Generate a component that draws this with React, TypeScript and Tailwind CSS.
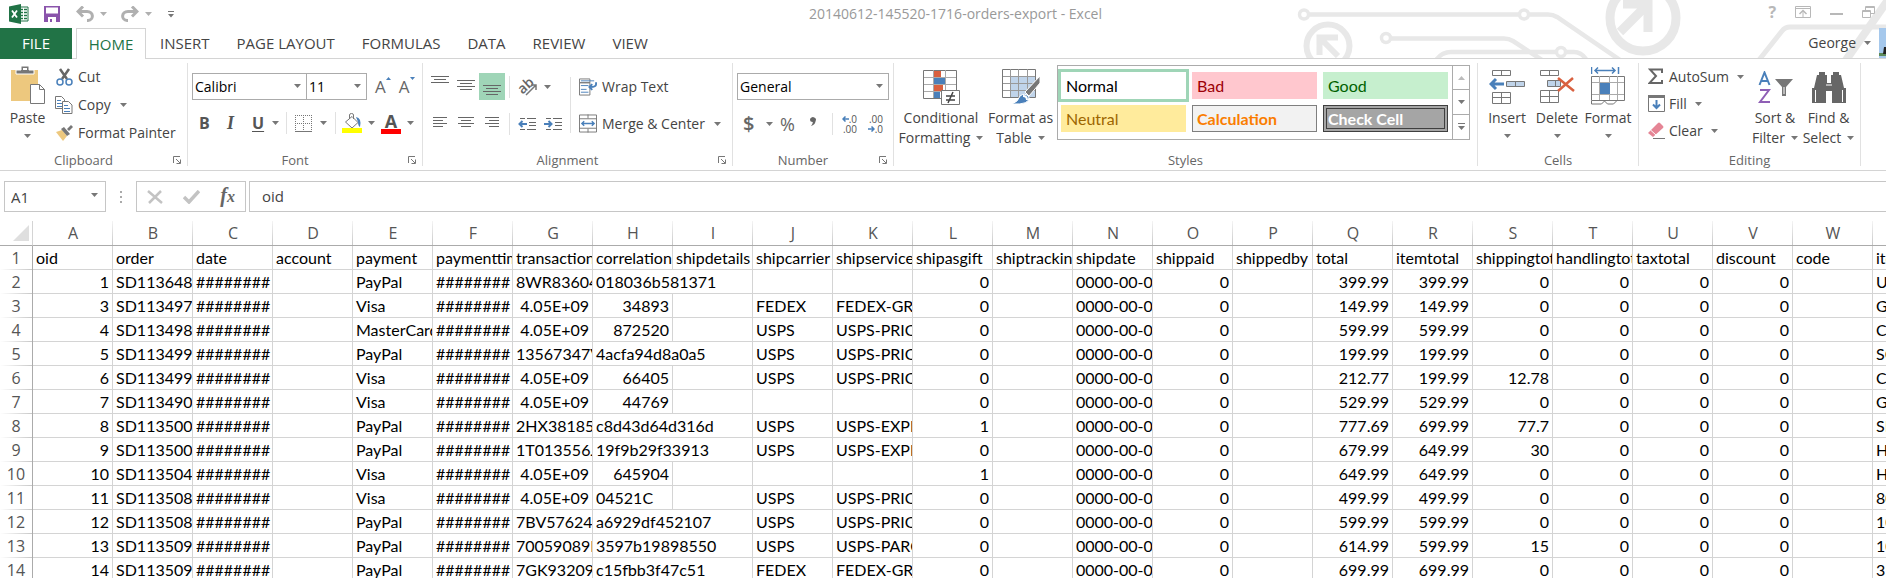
import type { ReactNode } from 'react'

const TABS = ['INSERT', 'PAGE LAYOUT', 'FORMULAS', 'DATA', 'REVIEW', 'VIEW']

const COLUMNS = 'ABCDEFGHIJKLMNOPQRSTUVWX'.split('')

const FIELDS = [
  'oid', 'order', 'date', 'account', 'payment', 'paymenttime', 'transactionid', 'correlationid',
  'shipdetails', 'shipcarrier', 'shipservice', 'shipasgift', 'shiptracking', 'shipdate', 'shippaid',
  'shippedby', 'total', 'itemtotal', 'shippingtotal', 'handlingtotal', 'taxtotal', 'discount', 'code', 'items',
]

interface Order {
  oid: number
  order: string
  payment: string
  transaction: string | null
  correlation: string | number
  carrier: string
  service: string
  gift: number
  total: number
  itemTotal: number
  shipping: number
  item: string
}

// transaction is null where the card number shows in scientific notation
const ORDERS: Order[] = [
  { oid: 1, order: 'SD1136485', payment: 'PayPal', transaction: '8WR836044', correlation: '018036b581371', carrier: '', service: '', gift: 0, total: 399.99, itemTotal: 399.99, shipping: 0, item: 'U' },
  { oid: 3, order: 'SD1134979', payment: 'Visa', transaction: null, correlation: 34893, carrier: 'FEDEX', service: 'FEDEX-GROUND', gift: 0, total: 149.99, itemTotal: 149.99, shipping: 0, item: 'G' },
  { oid: 4, order: 'SD1134983', payment: 'MasterCard', transaction: null, correlation: 872520, carrier: 'USPS', service: 'USPS-PRIORITY', gift: 0, total: 599.99, itemTotal: 599.99, shipping: 0, item: 'C' },
  { oid: 5, order: 'SD1134995', payment: 'PayPal', transaction: '13567347V', correlation: '4acfa94d8a0a5', carrier: 'USPS', service: 'USPS-PRIORITY', gift: 0, total: 199.99, itemTotal: 199.99, shipping: 0, item: 'SO' },
  { oid: 6, order: 'SD1134996', payment: 'Visa', transaction: null, correlation: 66405, carrier: 'USPS', service: 'USPS-PRIORITY', gift: 0, total: 212.77, itemTotal: 199.99, shipping: 12.78, item: 'C' },
  { oid: 7, order: 'SD1134902', payment: 'Visa', transaction: null, correlation: 44769, carrier: '', service: '', gift: 0, total: 529.99, itemTotal: 529.99, shipping: 0, item: 'G' },
  { oid: 8, order: 'SD1135005', payment: 'PayPal', transaction: '2HX381854', correlation: 'c8d43d64d316d', carrier: 'USPS', service: 'USPS-EXPRESS', gift: 1, total: 777.69, itemTotal: 699.99, shipping: 77.7, item: 'SI' },
  { oid: 9, order: 'SD1135006', payment: 'PayPal', transaction: '1T013556J', correlation: '19f9b29f33913', carrier: 'USPS', service: 'USPS-EXPRESS', gift: 0, total: 679.99, itemTotal: 649.99, shipping: 30, item: 'H' },
  { oid: 10, order: 'SD1135049', payment: 'Visa', transaction: null, correlation: 645904, carrier: '', service: '', gift: 1, total: 649.99, itemTotal: 649.99, shipping: 0, item: 'H' },
  { oid: 11, order: 'SD1135082', payment: 'Visa', transaction: null, correlation: '04521C', carrier: 'USPS', service: 'USPS-PRIORITY', gift: 0, total: 499.99, itemTotal: 499.99, shipping: 0, item: '80' },
  { oid: 12, order: 'SD1135083', payment: 'PayPal', transaction: '7BV576247', correlation: 'a6929df452107', carrier: 'USPS', service: 'USPS-PRIORITY', gift: 0, total: 599.99, itemTotal: 599.99, shipping: 0, item: '10' },
  { oid: 13, order: 'SD1135091', payment: 'PayPal', transaction: '70059089H', correlation: '3597b19898550', carrier: 'USPS', service: 'USPS-PARCEL', gift: 0, total: 614.99, itemTotal: 599.99, shipping: 15, item: '10' },
  { oid: 14, order: 'SD1135091', payment: 'PayPal', transaction: '7GK932096', correlation: 'c15fbb3f47c51', carrier: 'FEDEX', service: 'FEDEX-GROUND', gift: 0, total: 699.99, itemTotal: 699.99, shipping: 0, item: '3' },
]

function Caret({ className = 'text-[#777]' }: { className?: string }) {
  return (
    <svg width="7" height="4" viewBox="0 0 7 4" className={`shrink-0 ${className}`} fill="currentColor">
      <path d="M0 0h7L3.5 4z" />
    </svg>
  )
}

function Divider({ className = '' }: { className?: string }) {
  return <div className={`w-px shrink-0 bg-[#e1e1e1] ${className}`} />
}

function Group({ label, launcher, className, children }: { label: string; launcher?: boolean; className: string; children: ReactNode }) {
  return (
    <section className={`flex flex-col border-r border-[#e1e1e1] ${className}`}>
      <div className="flex-1">{children}</div>
      <div className="flex h-3 items-center px-1.5">
        <span className={`flex-1 text-center text-[13px] leading-3 text-[#666] ${launcher ? 'pr-3' : ''}`}>{label}</span>
        {launcher && (
          <button type="button" aria-label={`${label} settings`}>
            <svg width="8" height="8" viewBox="0 0 8 8" fill="none" stroke="#777">
              <path d="M.5 7V.5H7M3 3l4 4M7.5 3.5v4h-4" />
            </svg>
          </button>
        )}
      </div>
    </section>
  )
}

function BigButton({ icon, lines, className, inlineCaret }: { icon: ReactNode; lines: string[]; className: string; inlineCaret?: boolean }) {
  return (
    <button type="button" className={`flex shrink-0 flex-col items-center leading-5 ${className}`}>
      <span className="flex h-[45px] items-end justify-center pb-[3px]">{icon}</span>
      {lines.map((line, i) => (
        <span key={line} className="flex items-center gap-1.5 whitespace-nowrap">
          {line}
          {inlineCaret && i === lines.length - 1 && <Caret />}
        </span>
      ))}
      {!inlineCaret && <Caret className="mt-1.5 text-[#777]" />}
    </button>
  )
}

function SmallButton({ icon, label, caret, className = 'h-[27px] gap-[5px]' }: { icon: ReactNode; label: string; caret?: boolean; className?: string }) {
  return (
    <button type="button" className={`flex items-center whitespace-nowrap ${className}`}>
      <span className="flex w-[18px] shrink-0 justify-center">{icon}</span>
      {label}
      {caret && <Caret className="ml-1 text-[#777]" />}
    </button>
  )
}

function Picker({ label, value, className }: { label: string; value: string; className: string }) {
  return (
    <div className={`relative ${className}`}>
      <select
        aria-label={label}
        defaultValue={value}
        className="h-[27px] w-full appearance-none border border-[#ababab] bg-white pl-0.5 text-sm text-black"
      >
        <option>{value}</option>
      </select>
      <span className="pointer-events-none absolute top-[11px] right-1.5"><Caret /></span>
    </div>
  )
}

function Lines({ rows }: { rows: [number, number][] }) {
  const height = rows.length * 3 + 1
  return (
    <svg width="18" height={height} viewBox={`0 0 18 ${height}`} stroke="#666">
      {rows.map(([from, to], i) => <path key={i} d={`M${from} ${i * 3 + 0.5}H${to}`} />)}
    </svg>
  )
}

function Circuit() {
  return (
    <svg width="596" height="58" viewBox="0 0 596 58" className="absolute top-0 right-0" fill="none" stroke="#e8e8e8" strokeWidth="4.5">
      <path d="M19 14.5H229M239 14.5H258q5 0 9 2.5L330 60" />
      <path d="M101 38.5H214q5 0 9 2.5L252 60M146 60q6-8 15-8H266M276 52h8q7 0 12 7" />
      <circle cx="14" cy="14.5" r="4.5" strokeWidth="3.5" />
      <circle cx="234" cy="14.5" r="4.5" strokeWidth="3.5" />
      <circle cx="96" cy="38" r="4.5" strokeWidth="3.5" />
      <circle cx="271" cy="52" r="4.5" strokeWidth="3.5" />
      <circle cx="38" cy="46" r="21.5" strokeWidth="6" />
      <path d="M29.5 55V37.500H48M31 39l17 17" strokeWidth="6" />
      <circle cx="353" cy="18" r="33" strokeWidth="9" />
      <path d="M333 4h25v28M357 5l-27 27" strokeWidth="9" />
      <path d="M469 60l23-29q3-4 8-4h96" strokeWidth="5" />
      <path d="M556 60L598 0" strokeWidth="8" />
    </svg>
  )
}

function TitleBar() {
  return (
    <div className="relative flex h-7 items-center">
      <div className="flex flex-1 items-center pl-2">
        <svg width="22" height="20" viewBox="0 0 22 20">
          <path d="M10 3h10v14H10z" fill="#fff" stroke="#217346" />
          <path d="M13 5.5h2M16 5.5h3M13 8.500h2M16 8.5h3M13 11.5h2M16 11.5h3M13 14.5h2M16 14.5h3" stroke="#217346" strokeWidth="1.5" />
          <path d="M1 2.500L13 0v20L1 17.5z" fill="#217346" />
          <path d="M4 6.5l5 7M9 6.5l-5 7" stroke="#fff" strokeWidth="1.8" />
        </svg>
        <button type="button" aria-label="Save" className="ml-3.5">
          <svg width="16" height="16" viewBox="0 0 16 16">
            <path d="M0 0h16v16H0z" fill="#8a54ab" />
            <path d="M2 1.5h12v6H2zM4 11h8v5H4z" fill="#fff" />
            <path d="M6 13h2v3H6z" fill="#8a54ab" />
          </svg>
        </button>
        <button type="button" aria-label="Undo" className="ml-4 flex items-center gap-1.5 text-[#b0b0b0]">
          <svg width="18" height="16" viewBox="0 0 18 16" fill="none" stroke="currentColor" strokeWidth="3">
            <path d="M7 .5L2 5.500 7 10.5M2 5.5h9c7 0 7 8.500 1 9h-1" />
          </svg>
          <Caret className="text-[#b0b0b0]" />
        </button>
        <button type="button" aria-label="Redo" className="ml-3.5 flex items-center gap-1.5 text-[#b0b0b0]">
          <svg width="18" height="16" viewBox="0 0 18 16" fill="none" stroke="currentColor" strokeWidth="3">
            <path d="M11 .5L16 5.5 11 10.5M16 5.5H7c-7 0-7 8.500-1 9h1" />
          </svg>
          <Caret className="text-[#b0b0b0]" />
        </button>
        <button type="button" aria-label="Customize toolbar" className="ml-4">
          <svg width="6" height="7" viewBox="0 0 6 7" fill="#777"><path d="M0 0h6v1H0zM0 3h6L3 6.5z" /></svg>
        </button>
      </div>
      <h1 className="pl-7 text-sm text-[#999]">20140612-145520-1716-orders-export - Excel</h1>
      <div className="flex flex-1 items-center justify-end gap-[19px] pr-[11px] pb-1 text-[#b8b8b8]">
        <button type="button" aria-label="Help" className="text-base leading-5 font-bold">?</button>
        <button type="button" aria-label="Ribbon display options">
          <svg width="16" height="12" viewBox="0 0 16 12" fill="none" stroke="currentColor">
            <path d="M.5.5h15v11H.5zM.5 2.5h15M8 11V5" /><path d="M4.5 8L8 4.5 11.5 8" strokeWidth="1.5" />
          </svg>
        </button>
        <button type="button" aria-label="Minimize" className="pt-1">
          <svg width="13" height="2" viewBox="0 0 13 2"><path d="M0 1h13" stroke="currentColor" strokeWidth="2" /></svg>
        </button>
        <button type="button" aria-label="Restore">
          <svg width="13" height="12" viewBox="0 0 13 12" fill="none" stroke="currentColor">
            <path d="M.5 4.5h8v7h-8zM.5 5.5h8M3.5 4V.5h9v7H9M3.5 1.5h9" />
          </svg>
        </button>
      </div>
    </div>
  )
}

function TabRow() {
  return (
    <nav className="relative flex h-[31px] border-b border-[#d4d4d4] text-[15px] leading-[30px]">
      <button type="button" className="h-[31px] w-[72px] bg-[#217346] pb-px text-white">FILE</button>
      <button type="button" className="ml-1 h-[31px] w-[70px] border-x border-t border-[#d4d4d4] bg-white text-[#217346]">HOME</button>
      <div className="flex gap-[3px] pl-0.5">
        {TABS.map(tab => (
          <button key={tab} type="button" className="px-3">{tab}</button>
        ))}
      </div>
      <div className="ml-auto flex items-center text-sm">
        <button type="button" className="flex items-center gap-2">George <Caret /></button>
        <svg width="7" height="30" viewBox="0 0 7 30" className="ml-2">
          <path d="M0 0h7v30H0z" fill="#a5c8ec" /><path d="M0 25h7v3H0z" fill="#5d8a5a" /><path d="M5 19h2v7H4z" fill="#222" />
        </svg>
      </div>
    </nav>
  )
}

function Clipboard() {
  return (
    <Group label="Clipboard" launcher className="w-[188px]">
      <div className="flex">
        <BigButton
          className="w-[55px]"
          lines={['Paste']}
          icon={
            <svg width="36" height="39" viewBox="0 0 36 39">
              <path d="M1 4h27v31H1z" fill="#edc87e" />
              <path d="M6 8V4h5V0h8v4h5v4z" fill="#777" stroke="#fff" />
              <path d="M13 2h4v2h-4z" fill="#fff" />
              <path d="M20.5 18.5h9l5 5v14h-14z" fill="#fff" stroke="#777" />
              <path d="M29.5 18.5v5h5" fill="none" stroke="#777" />
            </svg>
          }
        />
        <div>
          <SmallButton
            label="Cut"
            className="h-7 gap-[5px]"
            icon={
              <svg width="17" height="18" viewBox="0 0 17 18" fill="none">
                <path d="M4 1l7 10M13 1L6 11" stroke="#666" strokeWidth="2.5" />
                <circle cx="4" cy="14" r="3" stroke="#4a80ba" strokeWidth="1.5" />
                <circle cx="13" cy="14" r="3" stroke="#4a80ba" strokeWidth="1.5" />
              </svg>
            }
          />
          <SmallButton
            label="Copy"
            caret
            className="h-7 gap-[5px]"
            icon={
              <svg width="18" height="18" viewBox="0 0 18 18" fill="#fff" stroke="#777">
                <path d="M.5.5h6l3 3v9h-9z" />
                <path d="M2 4.5h4M2 7.5h5M2 10.5h5" stroke="#4a80ba" />
                <path d="M7.5 5.5h6l3.5 3.5v8.500H7.5z" />
                <path d="M9 9.5h4M9 12.5h6M9 15.5h6" stroke="#4a80ba" />
              </svg>
            }
          />
          <SmallButton
            label="Format Painter"
            className="h-7 gap-[5px]"
            icon={
              <svg width="18" height="17" viewBox="0 0 18 17">
                <path d="M1 7l6-2 5 6-4 5z" fill="#edc87e" />
                <path d="M6 4l3-2 6 7-3 2zM12 4l4-4 2 2-4 4z" fill="#777" />
              </svg>
            }
          />
        </div>
      </div>
    </Group>
  )
}

function FontGroup() {
  return (
    <Group label="Font" launcher className="w-[235px]">
      <div className="flex items-center pt-2.5 pl-1">
        <Picker label="Font name" value="Calibri" className="w-[115px]" />
        <Picker label="Font size" value="11" className="-ml-px w-[61px]" />
        <button type="button" className="ml-2 flex text-[17px] leading-5 text-[#666]" aria-label="Grow font">
          A<svg width="5" height="3" viewBox="0 0 5 3" fill="#4a80ba"><path d="M0 3h5L2.5 0z" /></svg>
        </button>
        <button type="button" className="ml-2 flex text-[17px] leading-5 text-[#666]" aria-label="Shrink font">
          A<svg width="5" height="3" viewBox="0 0 5 3" fill="#4a80ba"><path d="M0 0h5L2.5 3z" /></svg>
        </button>
      </div>
      <div className="mt-[11px] flex h-6 items-center pl-2">
        <button type="button" className="w-7 pl-[3px] text-left text-base font-bold text-[#555]">B</button>
        <button type="button" className="w-7 pl-[3px] text-left font-[Liberation_Serif,serif] text-lg font-bold text-[#555] italic">I</button>
        <button type="button" className="flex w-[34px] items-center gap-2 text-base font-bold text-[#555]"><span className="underline underline-offset-2">U</span> <Caret /></button>
        <Divider className="h-[22px]" />
        <button type="button" aria-label="Borders" className="flex items-center gap-2 px-2">
          <svg width="17" height="17" viewBox="0 0 17 17" stroke="#777">
            <path d="M0 .5h17M.5 0v16M16.5 0v16M8.5 0v16M0 8.5h17" strokeDasharray="1 1" /><path d="M0 16.5h17" />
          </svg>
          <Caret />
        </button>
        <Divider className="h-[22px]" />
        <button type="button" aria-label="Fill color" className="ml-1.5 flex items-center gap-1.5">
          <svg width="20" height="20" viewBox="0 0 20 20" fill="none">
            <path d="M10 3.5l6 6-6 5.500-6.5-6z" stroke="#777" fill="#fff" /><path d="M7.5 6V2q0-1.500 2-1.500t2 1.500v4" stroke="#777" />
            <path d="M14 4q6 1 4 10-2-1-2-5z" fill="#4a80ba" /><path d="M0 15h20v5H0z" fill="#ff0" />
          </svg>
          <Caret />
        </button>
        <button type="button" aria-label="Font color" className="ml-1.5 flex items-center gap-1.5">
          <span className="w-5 border-b-[5px] border-[#f00] text-center text-lg leading-4 font-bold text-[#555]">A</span>
          <Caret />
        </button>
      </div>
    </Group>
  )
}

function Indent({ out }: { out?: boolean }) {
  return (
    <svg width="18" height="12" viewBox="0 0 18 12" fill="none">
      <path d="M2 .5h5M9 .5h9M11 4.5h7M11 7.5h7M2 11.5h5M9 11.5h9" stroke="#666" />
      <path d={out ? 'M9 6H2M4.5 3L1.5 6l3 3' : 'M0 6h7M4.5 3l3 3-3 3'} stroke="#4a80ba" strokeWidth="2" />
    </svg>
  )
}

function Alignment() {
  return (
    <Group label="Alignment" launcher className="w-[310px]">
      <div className="flex pt-2.5">
        <div className="w-[147px] pl-1">
          <div className="flex h-[27px] items-center">
            <button type="button" aria-label="Top align" className="flex w-[26px] justify-center pb-3"><Lines rows={[[0, 18], [3, 15], [0, 18]]} /></button>
            <button type="button" aria-label="Middle align" className="flex w-[26px] justify-center"><Lines rows={[[0, 18], [3, 15], [0, 18], [3, 15]]} /></button>
            <button type="button" aria-label="Bottom align" className="flex h-[27px] w-[26px] items-end justify-center bg-[#9fd5b7] pb-0.5"><Lines rows={[[0, 18], [3, 15], [0, 18], [3, 15]]} /></button>
            <Divider className="ml-1 h-[22px]" />
            <button type="button" aria-label="Orientation" className="ml-2 flex items-center gap-1.5">
              <svg width="20" height="20" viewBox="0 0 20 20" fill="none" stroke="#777" strokeWidth="1.5">
                <text x="0" y="14" transform="rotate(-42 7 10)" fontSize="14" fontWeight="600" fill="#666" stroke="none">ab</text>
                <path d="M8 18L18 8M13 8h5v5" />
              </svg>
              <Caret />
            </button>
          </div>
          <div className="mt-2.5 flex h-[27px] items-center">
            <button type="button" aria-label="Align left" className="flex w-[26px] justify-center"><Lines rows={[[2, 16], [2, 12], [2, 16], [2, 12]]} /></button>
            <button type="button" aria-label="Center" className="flex w-[26px] justify-center"><Lines rows={[[1, 17], [4, 14], [1, 17], [4, 14]]} /></button>
            <button type="button" aria-label="Align right" className="flex w-[26px] justify-center"><Lines rows={[[2, 16], [6, 16], [2, 16], [6, 16]]} /></button>
            <Divider className="ml-1 h-[22px]" />
            <button type="button" aria-label="Decrease indent" className="ml-2"><Indent out /></button>
            <button type="button" aria-label="Increase indent" className="ml-2"><Indent /></button>
          </div>
        </div>
        <Divider className="mt-1 h-14" />
        <div className="pl-2">
          <SmallButton
            label="Wrap Text"
            icon={
              <svg width="19" height="18" viewBox="0 0 19 18" fill="none" stroke="#777">
                <path d="M.5.5h11v4H.5zM.5 4.5h11v13H.5z" fill="#fff" />
                <path d="M2 2.5h14M2 7.5h8M2 11.5h6M2 14.5h8" stroke="#4a80ba" />
                <path d="M18 4v2q0 3-6 3M14 6l-3 3 3 3" stroke="#4a80ba" strokeWidth="2" />
              </svg>
            }
          />
          <div className="mt-2.5">
            <SmallButton
              label="Merge & Center"
              caret
              icon={
                <svg width="19" height="19" viewBox="0 0 19 19" fill="none" stroke="#777">
                  <path d="M.5.5h18v18H.5zM.5 4.5h18M.5 14.5h18M9.5 0v4M9.5 15v4" />
                  <path d="M3 9.5h13M5.5 7L3 9.5 5.500 12M13.5 7L16 9.5 13.5 12" stroke="#4a80ba" strokeWidth="1.5" />
                </svg>
              }
            />
          </div>
        </div>
      </div>
    </Group>
  )
}

function Decimals({ top, bottom, left }: { top: string; bottom: string; left?: boolean }) {
  const arrow = (
    <svg width="7" height="6" viewBox="0 0 7 6" fill="none" stroke="#4a80ba" strokeWidth="1.5">
      <path d={left ? 'M7 3H1M3.5.5L1 3l2.5 2.5' : 'M0 3h6M3.5.5L6 3 3.5 5.5'} />
    </svg>
  )
  return (
    <span className="flex w-4 flex-col items-end text-[10px] leading-[10px] text-[#555]">
      <span className="flex items-center">{left && arrow}{top}</span>
      <span className="flex items-center">{!left && arrow}{bottom}</span>
    </span>
  )
}

function NumberGroup() {
  return (
    <Group label="Number" launcher className="w-[161px]">
      <div className="px-1 pt-2.5"><Picker label="Number format" value="General" className="w-full" /></div>
      <div className="mt-2.5 flex h-[27px] items-center pl-2.5 text-[#666]">
        <button type="button" className="flex w-[37px] items-center gap-3 text-xl leading-5 font-semibold">$ <Caret /></button>
        <button type="button" className="w-7 text-left text-lg leading-5">%</button>
        <button type="button" aria-label="Comma style" className="w-6 pb-1 pl-0.5">
          <svg width="6" height="9" viewBox="0 0 6 9" fill="#666"><path d="M0 2.5a3 2.5 0 1 1 5.8 1Q5 8 1 9q2-2 1.800-4Q0 5 0 2.5z" /></svg>
        </button>
        <Divider className="h-[22px]" />
        <button type="button" aria-label="Increase decimal" className="ml-2"><Decimals top=".0" bottom=".00" left /></button>
        <button type="button" aria-label="Decrease decimal" className="ml-2.5"><Decimals top=".00" bottom=".0" /></button>
      </div>
    </Group>
  )
}

const STYLES = [
  { name: 'Normal', className: 'bg-white pl-[5px] text-black outline-3 outline-[#9fd5b7]' },
  { name: 'Bad', className: 'bg-[#ffc7ce] pl-[5px] text-[#9c0006]' },
  { name: 'Good', className: 'bg-[#c6efce] pl-[5px] text-[#006100]' },
  { name: 'Neutral', className: 'bg-[#ffeb9c] pl-[5px] text-[#9c6500]' },
  { name: 'Calculation', className: 'border border-[#7f7f7f] bg-[#f2f2f2] pl-1 font-bold text-[#fa7d00]' },
  { name: 'Check Cell', className: 'border-4 border-double border-[#3f3f3f] bg-[#a5a5a5] pl-px font-bold text-white' },
]

function StylesGroup() {
  return (
    <Group label="Styles" className="min-w-0 flex-1">
      <div className="flex pr-[7px] pl-1">
        <BigButton
          className="w-[86px]"
          inlineCaret
          lines={['Conditional', 'Formatting']}
          icon={
            <svg width="37" height="35" viewBox="0 0 37 35">
              <path d="M.5.5h33v28H.5z" fill="#fff" stroke="#777" />
              <path d="M11 1h7v6h-7zM11 15h9v7h-9z" fill="#d9603f" /><path d="M11 8h11v6H11zM11 22h6v6h-6z" fill="#4a80ba" />
              <path d="M10.5 0v28M22.5 0v28M1 7.5h32M1 14.5h32M1 21.5h32" stroke="#aaa" fill="none" />
              <path d="M18.5 20.5h18v14h-18z" fill="#fff" stroke="#777" />
              <path d="M23 26h9M23 30h9M30 22l-5 11" stroke="#444" strokeWidth="1.5" />
            </svg>
          }
        />
        <BigButton
          className="w-[73px]"
          inlineCaret
          lines={['Format as', 'Table']}
          icon={
            <svg width="38" height="36" viewBox="0 0 38 36">
              <path d="M.5.5h33v28H.5z" fill="#fff" stroke="#777" />
              <path d="M9 8h24v20H9z" fill="#c0d4ea" />
              <path d="M8.5 0v28M16.5 0v28M25.5 0v28M1 7.5h32M1 14.5h32M1 21.5h32" stroke="#999" fill="none" />
              <path d="M38 7v7l-11 13-4-4z" fill="#777" stroke="#fff" />
              <path d="M10 35q6-2 8-8 5-4 9 1 1 8-17 7z" fill="#4a80ba" stroke="#fff" />
              <path d="M21 27q4 0 4 4" stroke="#fff" strokeWidth="2" fill="none" />
            </svg>
          }
        />
        <div className="mt-0.5 flex h-[75px] min-w-0 flex-1 border border-[#ababab]">
          <div className="grid flex-1 grid-cols-3 content-start gap-1.5 pt-1.5 pr-1 pl-[3px]">
            {STYLES.map(s => (
              <button key={s.name} type="button" className={`flex h-[27px] items-center font-[Lato,sans-serif] text-base leading-5 ${s.className}`}>
                {s.name}
              </button>
            ))}
          </div>
          <div className="grid w-[17px] grid-rows-3 divide-y divide-[#ababab] border-l border-[#ababab]">
            <button type="button" aria-label="Scroll up" className="flex items-center justify-center"><Caret className="rotate-180 text-[#bbb]" /></button>
            <button type="button" aria-label="Scroll down" className="flex items-center justify-center"><Caret /></button>
            <button type="button" aria-label="More styles" className="flex flex-col items-center justify-center gap-0.5">
              <span className="h-px w-[7px] bg-[#777]" /><Caret />
            </button>
          </div>
        </div>
      </div>
    </Group>
  )
}

function Cells() {
  return (
    <Group label="Cells" className="w-[161px]">
      <div className="flex pl-1">
        <BigButton
          className="w-[50px]"
          lines={['Insert']}
          icon={
            <svg width="36" height="36" viewBox="0 0 36 36" fill="#fff" stroke="#777">
              <path d="M3.5 1.5h18v5h-18zM12.5 1v5M3.5 23.5h18v11h-18zM12.5 23v11M3 28.5h18" />
              <path d="M17.5 12.5h18v5h-18z" fill="#c0d4ea" /><path d="M26.5 12v6" />
              <path d="M15 15H2M7 10l-5 5 5 5" fill="none" stroke="#4a80ba" strokeWidth="3" />
            </svg>
          }
        />
        <BigButton
          className="w-[50px]"
          lines={['Delete']}
          icon={
            <svg width="36" height="36" viewBox="0 0 36 36" fill="#fff" stroke="#777">
              <path d="M1.5 1.5h18v5h-18zM10.5 1v5M1.5 21.5h18v12h-18zM10.5 21v12M1 27.5h18" />
              <path d="M8.5 11.5h13v6h-13z" fill="#c0d4ea" /><path d="M16.5 12v6" />
              <path d="M19 9l16 13M34 9L19 22" fill="none" stroke="#d9603f" strokeWidth="2.5" />
            </svg>
          }
        />
        <BigButton
          className="w-[52px]"
          lines={['Format']}
          icon={
            <svg width="35" height="38" viewBox="0 0 35 38" fill="none" stroke="#777">
              <path d="M.5 9.5h33v24H.5z" fill="#fff" />
              <path d="M8.5 9v24M18.5 9v24M26.5 9v24M1 15.5h32M1 27.5h32" stroke="#aaa" />
              <path d="M9 16h10v11H9z" fill="#4a80ba" stroke="none" />
              <path d="M.5 34v3h10l3-3 3 3h6l3-3" />
              <path d="M.5 0v7M27.5 0v7M4 3.5h20M7 .5l-3 3 3 3M21 .5l3 3-3 3" stroke="#4a80ba" strokeWidth="1.5" />
            </svg>
          }
        />
      </div>
    </Group>
  )
}

function Editing() {
  return (
    <Group label="Editing" className="w-[222px]">
      <div className="flex pl-2">
        <div className="w-[101px]">
          <SmallButton
            label="AutoSum"
            className="h-[27px] gap-1"
            caret
            icon={
              <svg width="16" height="17" viewBox="0 0 16 17" fill="none" stroke="#666" strokeWidth="2"><path d="M14 5V1.5H2l6 6.500-6.5 7H14V12" /></svg>
            }
          />
          <SmallButton
            label="Fill"
            className="h-[27px] gap-1"
            caret
            icon={
              <svg width="17" height="17" viewBox="0 0 17 17" fill="none">
                <path d="M.5.5h16v16H.5z" stroke="#777" /><path d="M0 1.5h17" stroke="#777" strokeWidth="3" />
                <path d="M8.5 5v8M5 9.5L8.5 13 12 9.5" stroke="#4a80ba" strokeWidth="2" />
              </svg>
            }
          />
          <SmallButton
            label="Clear"
            className="h-[27px] gap-1"
            caret
            icon={
              <svg width="18" height="17" viewBox="0 0 18 17">
                <path d="M1 11L11 1q1-1 2 0l3 3q1 1 0 2L6 15z" fill="#e58595" /><path d="M3.5 8L9 13" stroke="#fff" />
                <path d="M6 16.5h12" stroke="#777" />
              </svg>
            }
          />
        </div>
        <BigButton
          className="w-[54px]"
          inlineCaret
          lines={['Sort &', 'Filter']}
          icon={
            <svg width="35" height="34" viewBox="0 0 35 34" fill="none">
              <path d="M1.5 14L6.5 1.5 11.5 14M3 10h7" stroke="#4a80ba" strokeWidth="2" />
              <path d="M2 19h9L2 31h10" stroke="#8f5fb5" strokeWidth="2" />
              <path d="M17 8h18l-7 8v9h-4v-9z" fill="#777" /><path d="M26 16v7" stroke="#fff" />
            </svg>
          }
        />
        <BigButton
          className="w-[53px]"
          inlineCaret
          lines={['Find &', 'Select']}
          icon={
            <svg width="36" height="34" viewBox="0 0 36 34" fill="#666">
              <path d="M8 1h6v3h2v8h4V4h2V1h6v3h2l3 13h2v15H21V20h-6v12H1V17h2L6 4h2z" />
              <path d="M4.5 19v12M31.5 19v12M15 14h6" stroke="#fff" fill="none" />
            </svg>
          }
        />
      </div>
    </Group>
  )
}

function FormulaBar() {
  return (
    <div className="mt-2.5 flex h-[31px] pl-1 text-[15px]">
      <div className="relative w-[102px]">
        <input aria-label="Name box" defaultValue="A1" className="h-full w-full border border-[#c6c6c6] pl-1.5 text-[#444]" />
        <button type="button" aria-label="Name list" className="absolute top-3 right-2 flex"><Caret /></button>
      </div>
      <svg width="2" height="12" viewBox="0 0 2 12" fill="#aaa" className="mx-3.5 self-center"><path d="M0 0h2v2H0zM0 5h2v2H0zM0 10h2v2H0z" /></svg>
      <div className="flex w-[110px] items-center justify-between border border-[#c6c6c6] pr-2.5 pl-2.5">
        <button type="button" aria-label="Cancel">
          <svg width="16" height="14" viewBox="0 0 16 14" stroke="#c3c3c3" strokeWidth="2.5"><path d="M1 1l14 12M14 1L2 13" /></svg>
        </button>
        <button type="button" aria-label="Enter">
          <svg width="17" height="14" viewBox="0 0 17 14" fill="none" stroke="#c3c3c3" strokeWidth="3.5"><path d="M1 7l5 5L16 1" /></svg>
        </button>
        <button type="button" aria-label="Insert function" className="font-[Liberation_Serif,serif] text-xl leading-5 font-bold text-[#666] italic">
          f<span className="text-base">x</span>
        </button>
      </div>
      <input aria-label="Formula" defaultValue="oid" className="ml-[3px] min-w-0 flex-1 border border-r-0 border-[#c6c6c6] pl-3 text-[#444]" />
    </div>
  )
}

function Cell({ value, span }: { value: string | number; span?: number }) {
  return (
    <td
      colSpan={span}
      className={`h-6 overflow-hidden border-r border-b border-[#d4d4d4] px-[3px] whitespace-nowrap ${typeof value === 'number' ? 'text-right' : 'text-left'}`}
    >
      {value}
    </td>
  )
}

function RowHeader({ n }: { n: number }) {
  return (
    <th
      scope="row"
      className="h-6 border-r border-[#ababab] bg-[linear-gradient(to_right,#fff,#c8c8c8)] bg-[length:100%_1px] bg-bottom bg-no-repeat font-['Open_Sans',sans-serif] text-base leading-[22px] font-normal text-[#555]"
    >
      {n}
    </th>
  )
}

function OrderRow({ o, n }: { o: Order; n: number }) {
  // long text runs over into the empty cell to its right
  const spills = typeof o.correlation === 'string' && o.correlation.length > 8
  return (
    <tr>
      <RowHeader n={n} />
      <Cell value={o.oid} />
      <Cell value={o.order} />
      <Cell value="########" />
      <Cell value="" />
      <Cell value={o.payment} />
      <Cell value="########" />
      {o.transaction ? <Cell value={o.transaction} /> : <td className="border-r border-b border-[#d4d4d4] px-[3px] text-right">4.05E+09</td>}
      <Cell value={o.correlation} span={spills ? 2 : 1} />
      {!spills && <Cell value="" />}
      <Cell value={o.carrier} />
      <Cell value={o.service} />
      <Cell value={o.gift} />
      <Cell value="" />
      <Cell value="0000-00-00" />
      <Cell value={0} />
      <Cell value="" />
      <Cell value={o.total} />
      <Cell value={o.itemTotal} />
      <Cell value={o.shipping} />
      <Cell value={0} />
      <Cell value={0} />
      <Cell value={0} />
      <Cell value="" />
      <Cell value={o.item} />
    </tr>
  )
}

function Sheet() {
  return (
    <div className="mt-[9px] min-h-0 flex-1 overflow-hidden">
      <table className="w-[1953px] table-fixed border-separate border-spacing-0 font-[Lato,sans-serif] text-base leading-[22px] text-black">
        <colgroup>
          <col className="w-[33px]" />
          {COLUMNS.map(c => <col key={c} className="w-20" />)}
        </colgroup>
        <thead>
          <tr>
            <th className="h-[25px] border-r border-b border-r-[#d4d4d4] border-b-[#ababab] pr-[3px]">
              <svg width="16" height="16" viewBox="0 0 16 16" fill="#dfdfdf" className="ml-auto"><path d="M16 0v16H0z" /></svg>
            </th>
            {COLUMNS.map(c => (
              <th
                key={c}
                scope="col"
                className="h-[25px] border-b border-[#ababab] bg-[linear-gradient(to_bottom,#f4f4f4,#c8c8c8)] bg-[length:1px_100%] bg-right bg-no-repeat font-['Open_Sans',sans-serif] text-base leading-[22px] font-normal text-[#555]"
              >
                {c}
              </th>
            ))}
          </tr>
        </thead>
        <tbody>
          <tr>
            <RowHeader n={1} />
            {FIELDS.map(f => <Cell key={f} value={f} />)}
          </tr>
          {ORDERS.map((o, i) => <OrderRow key={o.oid} o={o} n={i + 2} />)}
        </tbody>
      </table>
    </div>
  )
}

export default function App() {
  return (
    <div className="flex h-screen flex-col overflow-hidden bg-white font-['Open_Sans',sans-serif] text-sm text-[#444]">
      <header className="relative">
        <Circuit />
        <TitleBar />
        <TabRow />
      </header>
      <div className="flex h-28 border-b border-[#d4d4d4] pt-1 pr-[25px] pb-1">
        <Clipboard />
        <FontGroup />
        <Alignment />
        <NumberGroup />
        <StylesGroup />
        <Cells />
        <Editing />
      </div>
      <FormulaBar />
      <Sheet />
    </div>
  )
}
